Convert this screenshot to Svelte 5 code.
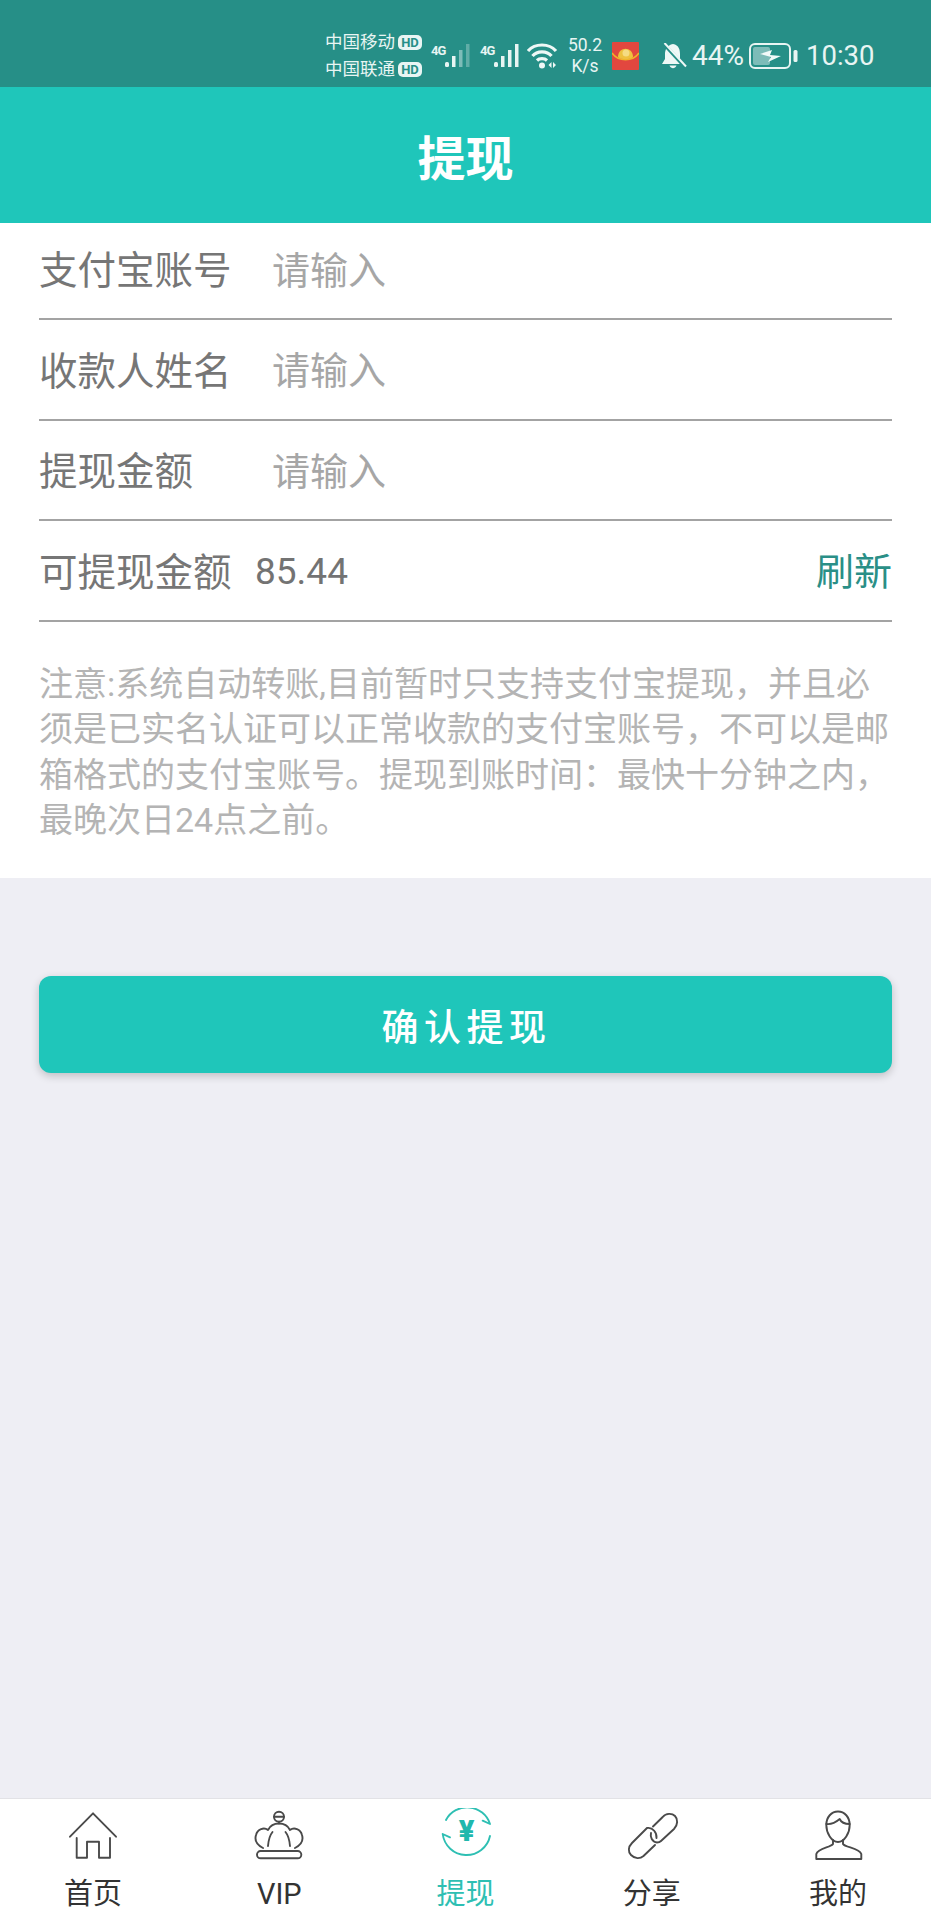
<script>
  const rows = [
    { label: "支付宝账号" },
    { label: "收款人姓名" },
    { label: "提现金额" }
  ];

  const tabs = [
    { name: "home", label: "首页" },
    { name: "vip", label: "VIP" },
    { name: "cash", label: "提现", active: true },
    { name: "share", label: "分享" },
    { name: "mine", label: "我的" }
  ];
</script>

<div class="page">
  <div class="statusbar">
    <div class="carriers">
      <div class="carrier">中国移动<span class="hd">HD</span></div>
      <div class="carrier">中国联通<span class="hd">HD</span></div>
    </div>
    <div class="signal">
      <span class="net">4G</span>
      <svg width="27" height="26" viewBox="0 0 27 26" fill="#e8f5f3">
        <rect x="0" y="19" width="4" height="5" rx="1.5" />
        <rect x="7" y="13" width="3.5" height="11" />
        <rect x="14" y="7" width="3.5" height="17" opacity="0.45" />
        <rect x="21" y="1" width="3.5" height="23" opacity="0.3" />
      </svg>
    </div>
    <div class="signal second">
      <span class="net">4G</span>
      <svg width="27" height="26" viewBox="0 0 27 26" fill="#e8f5f3">
        <rect x="0" y="19" width="4" height="5" rx="1.5" />
        <rect x="7" y="13" width="3.5" height="11" />
        <rect x="14" y="7" width="3.5" height="17" />
        <rect x="21" y="1" width="3.5" height="23" />
      </svg>
    </div>
    <svg class="wifi" width="31" height="26" viewBox="0 0 31 26" fill="none" stroke="#eef8f6" stroke-width="3.200">
      <path d="M1 8 C8 0 22 0 29 8" />
      <path d="M5.5 13 C10 7.5 20 7.5 24.5 13" />
      <path d="M10 17.500 C12.500 15 17.500 15 20 17.500" />
      <circle cx="15" cy="22.500" r="3" fill="#eef8f6" stroke="none" />
      <path d="M24.500 19 L21.500 22 L24.500 25 Z M26 19 L29 22 L26 25 Z" fill="#eef8f6" stroke="none" />
    </svg>
    <div class="speed"><span>50.2</span><span>K/s</span></div>
    <svg class="packet" width="27" height="28" viewBox="0 0 27 28">
      <rect width="27" height="28" rx="1" fill="#e2473f" />
      <path d="M0 11 C6 20 21 20 27 11" fill="none" stroke="#f0b429" stroke-width="1.500" />
      <path d="M6 15 C6 4 21 4 21 15 C18 18 9 18 6 15 Z" fill="#eec13f" />
      <circle cx="14" cy="11" r="3.500" fill="#f5dc82" />
    </svg>
    <svg class="bell" width="26" height="26" viewBox="0 0 26 26">
      <path d="M12 1 C6 2 4 7 4 11 V16 L1 21 H22 L19 16 V11 C19 7 18 2 12 1 Z" fill="#eef8f6" />
      <path d="M8.500 22.500 C10 26 14 26 15.500 22.500 Z" fill="#eef8f6" />
      <path d="M2 0 L24 24" stroke="#268f87" stroke-width="3.500" />
      <path d="M3.500 0 L25 23.500" stroke="#eef8f6" stroke-width="2" />
    </svg>
    <span class="pct">44%</span>
    <svg class="battery" width="49" height="26" viewBox="0 0 49 26">
      <rect x="1" y="1" width="40" height="24" rx="5" fill="none" stroke="#e8f5f3" stroke-width="2" />
      <rect x="4" y="4" width="17" height="18" rx="2" fill="#e8f5f3" opacity="0.45" />
      <path d="M11 11 L23 7 L21 12 L32 13 L19 19 L22 14 Z" fill="#f2faf9" />
      <rect x="44.500" y="7" width="4" height="12" rx="1.500" fill="#e8f5f3" />
    </svg>
    <span class="time">10:30</span>
  </div>

  <header class="title">提现</header>

  <section class="panel">
    <div class="form">
      {#each rows as row}
        <div class="row">
          <span class="label">{row.label}</span>
          <span class="placeholder">请输入</span>
        </div>
      {/each}
      <div class="row">
        <span class="label short">可提现金额</span>
        <span class="amount">85.44</span>
        <span class="refresh">刷新</span>
      </div>
    </div>
    <p class="notice">注意:系统自动转账,目前暂时只支持支付宝提现，并且必须是已实名认证可以正常收款的支付宝账号，不可以是邮箱格式的支付宝账号。提现到账时间：最快十分钟之内，最晚次日24点之前。</p>
  </section>

  <button class="submit">确认提现</button>

  <nav class="tabbar">
    {#each tabs as tab}
      <div class="tab" class:active={tab.active}>
        <svg class="tabicon" width="56" height="56" viewBox="0 0 56 56" fill="none" stroke-width="1.900" stroke-linecap="round" stroke-linejoin="round">
          {#if tab.name === "home"}
            <path d="M5 28.700 L28 5.300 L51 28.700" />
            <path d="M11.700 30 V49.700 H22 V33.700 H34 V49.700 H45 V30" />
          {:else if tab.name === "vip"}
            <circle cx="28" cy="8.700" r="5" />
            <path d="M23 8.700 H33 M28 13.700 V15.500" />
            <path d="M12 40 C6 37 3.500 32 5 27 C6.500 21 13 19 17 22 C19 18 23 15.500 28 15.500 C33 15.500 37 18 39 22 C43 19 49.500 21 51 27 C52.500 32 50 37 44 40" />
            <path d="M17 38 C17.500 32 19 27 21.500 24 M39 38 C38.500 32 37 27 34.500 24" />
            <rect x="6" y="43" width="44.300" height="7.300" rx="3.600" />
          {:else if tab.name === "cash"}
            <path d="M9 12 A24 24 0 0 1 53 16 L45.700 12.700" />
            <path d="M53 28 A24 24 0 0 1 5.700 26 L13 29.300" />
            <text class="yen" x="29.700" y="33" text-anchor="middle">¥</text>
          {:else if tab.name === "share"}
            <path d="M27 25 C26 29 28 34 33 34.500 C35 34.500 36 34 37 33 L50 21 C54 17 54 11 51 8 C48 5 42 5 38.700 9 L29 18.500" />
            <path d="M32.500 30 C33 25 29 19 23 20 L8 35 C4 39 4 44 7 47 C11 51 16 51 19.500 48 L31 37" />
          {:else}
            <path d="M16.300 17 C16.300 9 21.500 3.500 28 3.500 C34.500 3.500 39.700 9 39.700 17 C39.700 25 34.500 34 28 34 C21.500 34 16.300 25 16.300 17 Z" />
            <path d="M16.300 16 C20 16.500 25 15 29.700 11 C31 14 35 16 39.700 16" />
            <path d="M23 32 V36 C21 39.500 8 40 6.300 46 V51 H51.300 V46 C49.500 40 35 39.500 33 36 V32" />
          {/if}
        </svg>
        <span class="tablabel">{tab.label}</span>
      </div>
    {/each}
  </nav>
</div>

<style>
  :global(body) {
    margin: 0;
  }
  .page {
    width: 931px;
    height: 1920px;
    display: flex;
    flex-direction: column;
    background: #eeeef4;
    font-family: "Roboto", "Noto Sans CJK SC", sans-serif;
  }
  .statusbar {
    height: 87px;
    box-sizing: border-box;
    padding: 24px 0 0 325px;
    display: flex;
    align-items: center;
    background: #268f87;
    color: #e8f5f3;
  }
  .statusbar > * {
    flex: none;
  }
  .carriers {
    width: 97px;
    font-size: 17.500px;
    line-height: 27px;
  }
  .carrier {
    display: flex;
    align-items: center;
    white-space: nowrap;
  }
  .hd {
    margin-left: 3px;
    width: 24px;
    height: 15px;
    border-radius: 5px;
    background: #e8f5f3;
    color: #268f87;
    font-size: 13px;
    line-height: 15px;
    font-weight: 700;
    text-align: center;
  }
  .signal {
    margin-left: 9px;
    display: flex;
    align-items: flex-start;
  }
  .signal.second {
    margin-left: 8px;
  }
  .net {
    width: 14px;
    font-size: 13px;
    line-height: 16px;
    font-weight: 700;
    letter-spacing: -1px;
  }
  .wifi {
    margin-left: 6px;
  }
  .speed {
    margin-left: 9px;
    width: 36px;
    display: flex;
    flex-direction: column;
    align-items: center;
    font-size: 17.500px;
    line-height: 21px;
  }
  .packet {
    margin-left: 9px;
  }
  .bell {
    margin-left: 22px;
  }
  .pct {
    margin-left: 5px;
    font-size: 28px;
  }
  .battery {
    margin-left: 5px;
  }
  .time {
    margin-left: 8px;
    font-size: 27.500px;
  }
  .title {
    height: 136px;
    display: flex;
    align-items: center;
    justify-content: center;
    background: #1fc6ba;
    color: #fff;
    font-size: 48px;
    font-weight: 700;
  }
  .panel {
    height: 655px;
    box-sizing: border-box;
    padding: 0 39px;
    background: #fff;
  }
  .form {
    display: flex;
    flex-direction: column;
  }
  .row {
    height: 100.500px;
    box-sizing: border-box;
    display: flex;
    align-items: center;
    padding-bottom: 3px;
    border-bottom: 2px solid #a3a3a3;
    font-size: 38px;
  }
  .row:first-child {
    height: 97px;
    padding-bottom: 7px;
  }
  .label {
    width: 233px;
    color: #767676;
    font-size: 38.500px;
    white-space: nowrap;
  }
  .label.short {
    width: 216px;
  }
  .placeholder {
    color: #a6a6a6;
  }
  .amount {
    flex: 1;
    padding-top: 6px;
    color: #737373;
    font-size: 37px;
  }
  .refresh {
    color: #2a8f87;
  }
  .notice {
    margin: 40px 0 0;
    font-size: 34px;
    line-height: 45.600px;
    color: #b4b4b4;
  }
  .submit {
    margin: 98px 39px 0;
    padding-left: 8px;
    height: 97px;
    border: none;
    border-radius: 12px;
    background: #1fc6ba;
    color: #fff;
    font-family: inherit;
    font-size: 37px;
    font-weight: 500;
    letter-spacing: 5.500px;
    box-shadow: 0 3px 8px rgba(0, 0, 0, 0.2);
  }
  .tabbar {
    margin-top: auto;
    height: 122px;
    box-sizing: border-box;
    display: grid;
    grid-template-columns: repeat(5, 1fr);
    background: #fff;
    border-top: 1px solid #e2e2e6;
  }
  .tab {
    display: flex;
    flex-direction: column;
    align-items: center;
    color: #333;
    stroke: #4a4a4a;
  }
  .tab.active {
    color: #2ebfb3;
    stroke: #2ebfb3;
  }
  .tabicon {
    margin-top: 9px;
    flex: none;
  }
  .yen {
    fill: #1fb8ad;
    stroke: none;
    font-size: 29px;
    font-weight: 900;
  }
  .tablabel {
    margin-top: 10px;
    font-size: 29px;
    line-height: 40px;
  }
</style>
